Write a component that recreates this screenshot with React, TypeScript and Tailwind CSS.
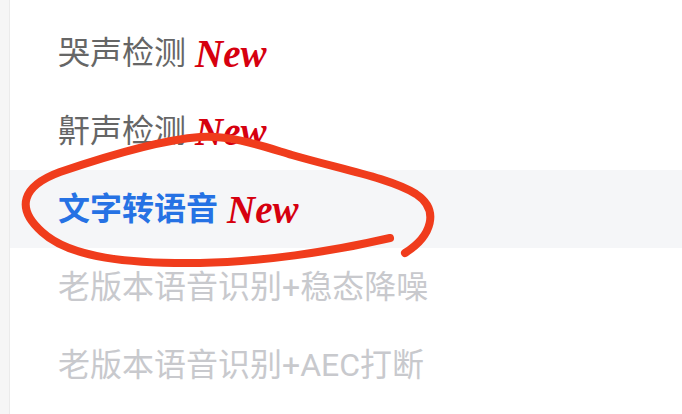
import React from "react";

const rows = [
  { text: "哭声检测", tone: "normal", isNew: true },
  { text: "鼾声检测", tone: "normal", isNew: true },
  { text: "文字转语音", tone: "active", isNew: true },
  { text: "老版本语音识别+稳态降噪", tone: "disabled", isNew: false },
  { text: "老版本语音识别+AEC打断", tone: "disabled", isNew: false },
];

export default function App() {
  return (
    <div className="relative flex h-[414px] w-full overflow-hidden bg-white">
      {/* Left edge */}
      <div className="w-[10px] shrink-0 border-r border-[#ebebeb] bg-[#f6f6f6]" />

      {/* Menu list */}
      <div className="flex flex-1 flex-col pt-[14px]">
        {rows.map((row) => (
          <div
            key={row.text}
            className={`flex h-[78px] items-center pl-[48px] ${
              row.tone === "active" ? "bg-[#f5f6f8]" : ""
            }`}
          >
            <span
              className={`text-[32px] leading-none font-['Roboto','Noto_Sans_CJK_SC',sans-serif] ${
                row.tone === "active"
                  ? "font-bold text-[#2672e4]"
                  : row.tone === "disabled"
                  ? "text-[#c8c9cd]"
                  : "text-[#666666]"
              }`}
            >
              {row.text}
            </span>
            {row.isNew && (
              <span className="ml-[9px] text-[39px] leading-none font-bold italic text-[#d6000f] font-['Liberation_Serif',serif]">
                New
              </span>
            )}
          </div>
        ))}
      </div>

      {/* Hand-drawn annotation */}
      <svg
        className="pointer-events-none absolute inset-0"
        width="682"
        height="414"
        viewBox="0 0 682 414"
      >
        <path
          d="M390,238 C330,252 260,262 200,263 C130,264 70,258 42,232 C15,208 22,186 60,172 C110,155 160,140 200,137 C232,135 262,146 292,155 C340,169 390,178 416,194 C440,210 432,236 405,253"
          fill="none"
          stroke="#f03c1c"
          strokeWidth="8"
          strokeLinecap="round"
          strokeLinejoin="round"
        />
      </svg>
    </div>
  );
}
